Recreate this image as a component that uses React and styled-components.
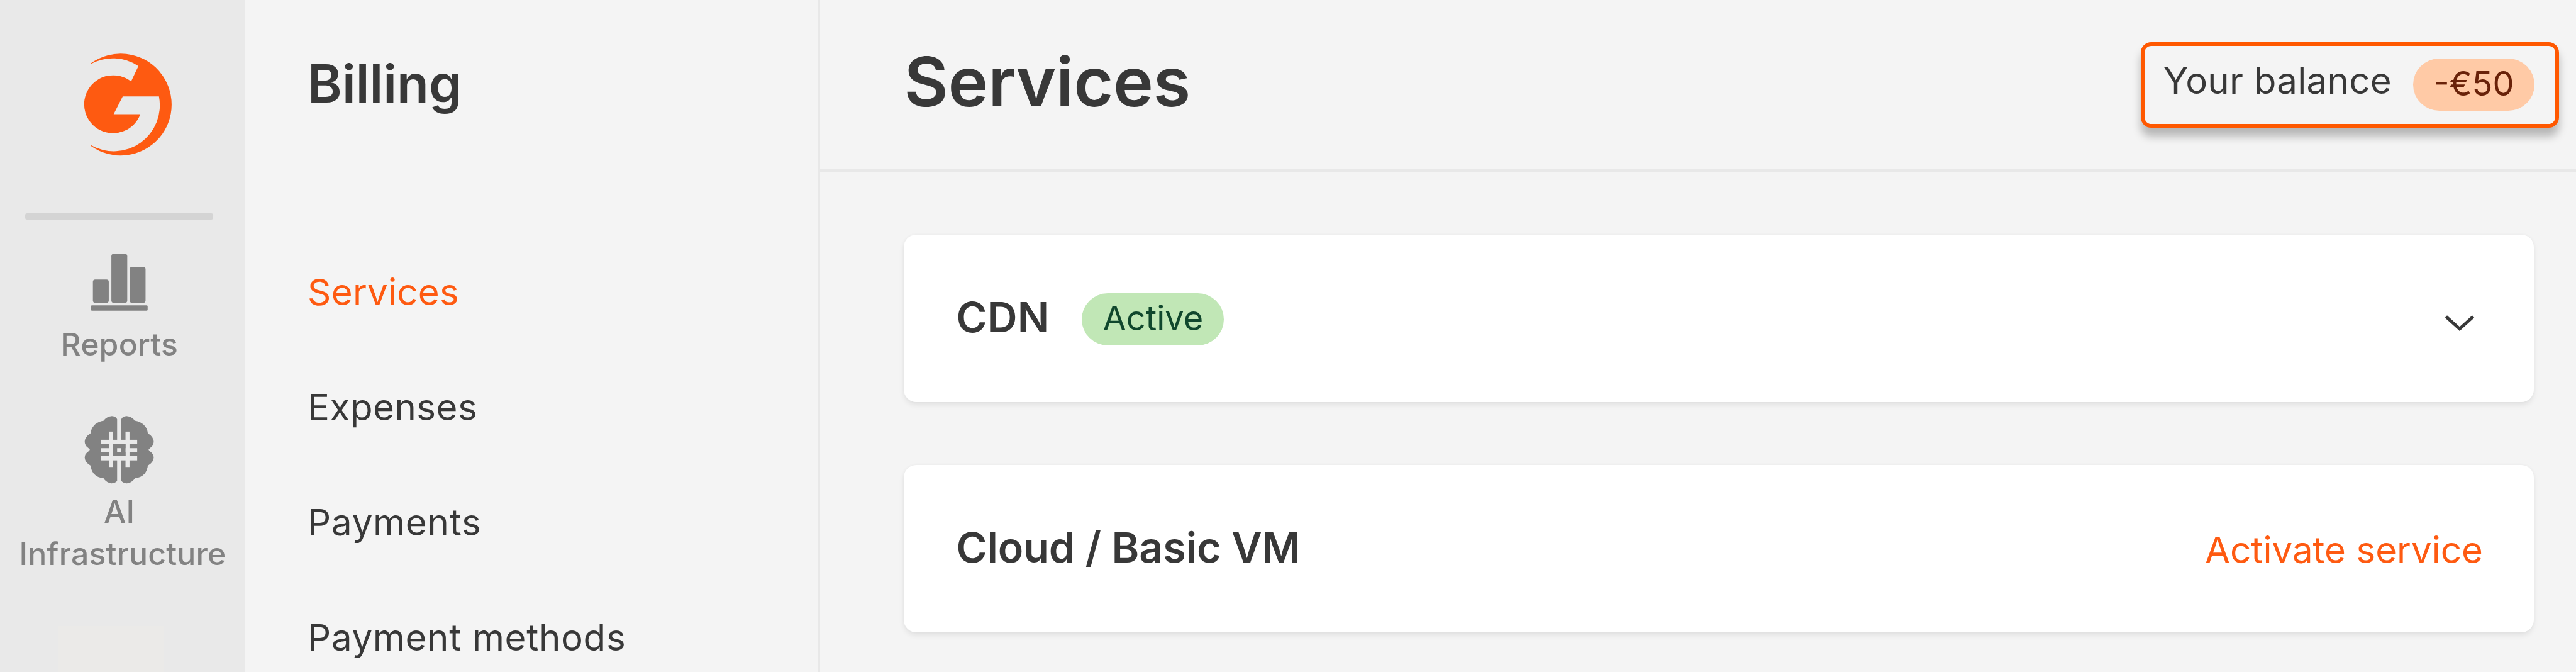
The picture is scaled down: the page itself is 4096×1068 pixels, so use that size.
import React from "react";
import styled, { createGlobalStyle } from "styled-components";

// Design units are converted to screen pixels with one zoom factor.
const ZOOM = 4096 / 4924;
const u = (n) => `${(n * ZOOM).toFixed(3)}px`;

const color = {
  accent: "#fe5a11",
  frame: "#ff5800",
  text: "#383838",
  muted: "#828282",
  page: "#f4f4f4",
  rail: "#e9e9e9",
  line: "#e8e8e8",
};

const GlobalStyle = createGlobalStyle`
  * { box-sizing: border-box; }
  html, body { margin: 0; padding: 0; background: ${color.page}; overflow: hidden; }
  body { font-family: Inter, "Liberation Sans", sans-serif; color: ${color.text}; }
`;

const Page = styled.div`
  display: flex;
  width: 100vw;
  height: 100vh;
  overflow: hidden;
`;

const Rail = styled.aside`
  flex: none;
  display: flex;
  flex-direction: column;
  align-items: center;
  width: ${u(468)};
  height: 100%;
  padding: ${u(100)} ${u(12)} 0 0;
  background: ${color.rail};
  overflow: hidden;
`;

const LogoLink = styled.a`
  display: block;
  flex: none;
  padding-left: ${u(32)};
  height: ${u(200)};
  svg { display: block; width: ${u(168)}; height: ${u(200)}; }
`;

const RailDivider = styled.hr`
  flex: none;
  width: ${u(360)};
  height: ${u(12)};
  margin: ${u(108)} 0 0;
  border: 0;
  border-radius: ${u(4)};
  background: #d4d4d4;
`;

const RailItem = styled.a`
  flex: none;
  display: flex;
  flex-direction: column;
  align-items: center;
  margin-top: ${(p) => u(p.$space)};
  color: ${color.muted};
  svg { display: block; }
`;

const RailLabel = styled.span`
  display: block;
  margin-top: ${(p) => u(p.$space || 0)};
  padding-left: ${(p) => u(p.$indent || 0)};
  font-size: ${u(60)};
  font-weight: 500;
  line-height: ${u(80)};
  letter-spacing: ${u(0.2)};
  white-space: nowrap;
`;

const RailGhost = styled.div`
  flex: none;
  width: ${u(200)};
  height: ${u(120)};
  margin: ${u(98)} ${u(32)} 0 0;
  background: #ebeae8;
`;

const BarsIcon = styled.svg`
  width: ${u(112)};
  height: ${u(112)};
`;

const BrainIcon = styled.svg`
  width: ${u(136)};
  height: ${u(132)};
`;

const SubNav = styled.nav`
  flex: none;
  width: ${u(1100)};
  height: 100%;
  padding-left: ${u(120)};
  border-right: 4px solid ${color.line};
`;

const SubNavTitle = styled.h2`
  margin: 0;
  height: ${u(448.5)};
  font-size: ${u(100)};
  font-weight: 600;
  line-height: ${u(319.2)};
`;

const NavLink = styled.a`
  display: block;
  height: ${u(220)};
  font-size: ${u(70)};
  line-height: ${u(220)};
  letter-spacing: ${(p) => u(p.$tracking)};
  color: ${(p) => (p.$active ? color.accent : color.text)};
  white-space: nowrap;
`;

const Main = styled.main`
  flex: 1;
  min-width: 0;
`;

const Header = styled.header`
  display: flex;
  justify-content: space-between;
  align-items: flex-start;
  height: ${u(328)};
  padding: 0 ${u(32)} 0 ${u(160)};
  border-bottom: 4px solid ${color.line};
`;

const Title = styled.h1`
  margin: 0;
  font-size: ${u(130)};
  font-weight: 600;
  line-height: ${u(313.4)};
  letter-spacing: ${u(-0.2)};
`;

const Balance = styled.div`
  display: flex;
  justify-content: space-between;
  align-items: flex-start;
  width: ${u(800)};
  height: ${u(164)};
  margin-top: ${u(80)};
  padding: 0 ${u(40)} 0 ${u(36)};
  border: ${u(8)} solid ${color.frame};
  border-radius: ${u(20)};
  box-shadow: 0 ${u(16)} ${u(16)} rgba(0, 0, 0, 0.25);
  background: ${color.page};
`;

const BalanceLabel = styled.span`
  font-size: ${u(70)};
  line-height: ${u(133)};
  letter-spacing: ${u(0.3)};
  white-space: nowrap;
`;

const Pill = styled.span`
  flex: none;
  width: ${(p) => u(p.$width)};
  height: ${u(100)};
  border-radius: ${u(50)};
  font-size: ${u(65)};
  line-height: ${u(97)};
  text-align: center;
  white-space: nowrap;
`;

const AmountPill = styled(Pill)`
  margin-top: ${u(24)};
  background: #ffcaa6;
  color: #692209;
`;

const StatusPill = styled(Pill)`
  margin: ${u(4)} 0 0 ${u(62.5)};
  background: #c1e7b6;
  color: #10472d;
`;

const CardList = styled.section`
  display: flex;
  flex-direction: column;
  gap: ${u(120)};
  padding: ${u(120)} ${u(80)} 0 ${u(160)};
`;

const Card = styled.article`
  display: flex;
  align-items: center;
  height: ${u(320)};
  padding: 0 ${u(98)} 0 ${u(100)};
  border-radius: ${u(24)};
  background: #fff;
  box-shadow: 0 ${u(5)} ${u(10)} rgba(0, 0, 0, 0.07), 0 0 ${u(6)} rgba(0, 0, 0, 0.03);
`;

const CardTitle = styled.h3`
  margin: 0 0 ${u(2.2)};
  font-size: ${u(80)};
  font-weight: 600;
  line-height: ${u(100)};
  letter-spacing: ${(p) => u(p.$tracking || 0)};
  white-space: nowrap;
`;

const CardAction = styled.a`
  margin: ${u(5.6)} 0 0 auto;
  font-size: ${u(70)};
  line-height: ${u(90)};
  color: ${color.accent};
  white-space: nowrap;
`;

const Chevron = styled.svg`
  display: block;
  width: ${u(60)};
  height: ${u(36)};
  margin: ${u(20)} ${u(14)} 0 auto;
`;

function Logo() {
  return (
    <svg viewBox="480 300 504 600" fill={color.accent}>
      <path d="M522 363 A292 292 0 1 1 522 837 L522 833 A264 264 0 0 0 912 553 L704 553 L652 655 L805 655 A166 166 0 1 1 752 468 L794 379 A264 264 0 0 0 522 367 Z" />
    </svg>
  );
}

function Bars() {
  return (
    <BarsIcon viewBox="516 132 336 336" fill="currentColor">
      <rect x="533" y="281" width="91" height="133" rx="13" />
      <rect x="639" y="134" width="91" height="280" rx="13" />
      <rect x="744" y="209" width="91" height="205" rx="13" />
      <rect x="521" y="429" width="326" height="30" rx="6" />
    </BarsIcon>
  );
}

const BRAIN_HALF =
  "M222 62 Q216 46 192 44 Q160 47 146 70 Q110 74 88 100 Q72 118 70 142 Q36 164 36 192 Q38 216 58 228 L66 237 L58 246 Q36 260 36 282 Q38 310 70 328 Q72 352 88 374 Q110 398 144 400 Q160 427 190 430 Q216 428 222 414 Z";

function Brain() {
  return (
    <BrainIcon viewBox="30 36 408 396">
      <g fill={color.muted}>
        <path d={BRAIN_HALF} />
        <path d={BRAIN_HALF} transform="translate(468 0) scale(-1 1)" />
      </g>
      <g fill={color.rail}>
        <rect x="131" y="180" width="206" height="24" />
        <rect x="131" y="274" width="206" height="24" />
        <rect x="131" y="228" width="206" height="24" />
        <rect x="175" y="133" width="23" height="203" />
        <rect x="270" y="133" width="23" height="203" />
      </g>
      <rect x="198" y="204" width="72" height="70" fill={color.muted} />
      <rect x="222" y="228" width="24" height="24" fill={color.rail} />
    </BrainIcon>
  );
}

const NAV = [
  { label: "Services", tracking: 0.3, active: true },
  { label: "Expenses", tracking: 0.6 },
  { label: "Payments", tracking: 0.9 },
  { label: "Payment methods", tracking: 0.8 },
];

export default function App() {
  return (
    <>
      <GlobalStyle />
      <Page>
        <Rail>
          <LogoLink>
            <Logo />
          </LogoLink>
          <RailDivider />
          <RailItem $space={64}>
            <Bars />
            <RailLabel $space={22.2}>Reports</RailLabel>
          </RailItem>
          <RailItem $space={93.8}>
            <Brain />
            <RailLabel $space={14.2}>AI</RailLabel>
            <RailLabel $indent={13}>Infrastructure</RailLabel>
          </RailItem>
          <RailGhost />
        </Rail>
        <SubNav>
          <SubNavTitle>Billing</SubNavTitle>
          {NAV.map((item) => (
            <NavLink key={item.label} $active={item.active} $tracking={item.tracking}>
              {item.label}
            </NavLink>
          ))}
        </SubNav>
        <Main>
          <Header>
            <Title>Services</Title>
            <Balance>
              <BalanceLabel>Your balance</BalanceLabel>
              <AmountPill $width={232}>-€50</AmountPill>
            </Balance>
          </Header>
          <CardList>
            <Card>
              <CardTitle>CDN</CardTitle>
              <StatusPill $width={272}>Active</StatusPill>
              <Chevron viewBox="0 0 60 36" fill="none" stroke={color.text} strokeWidth="6">
                <path d="M4 5 L30 28.5 L56 5" />
              </Chevron>
            </Card>
            <Card>
              <CardTitle $tracking={-0.15}>Cloud / Basic VM</CardTitle>
              <CardAction>Activate service</CardAction>
            </Card>
          </CardList>
        </Main>
      </Page>
    </>
  );
}
